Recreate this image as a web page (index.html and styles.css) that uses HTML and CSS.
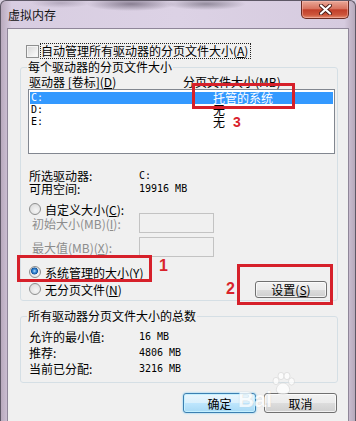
FILE: index.html
```html
<!DOCTYPE html>
<html lang="zh-CN">
<head>
  <meta charset="UTF-8">
  <title>虚拟内存</title>
  <link rel="stylesheet" href="styles.css">
</head>
<body>
  <div class="window">
    <div class="titlebar">
      <span class="title">虚拟内存</span>
      <div class="close">
        <svg width="13" height="11" viewBox="0 0 13 11">
          <path d="M2 1.5 L11 9.5 M11 1.5 L2 9.5" stroke="#4a1d18" stroke-width="4" stroke-linecap="round"/>
          <path d="M2 1.5 L11 9.5 M11 1.5 L2 9.5" stroke="#fff" stroke-width="2.2" stroke-linecap="round"/>
        </svg>
      </div>
    </div>

    <div class="client">
      <div class="check-row">
        <span class="checkbox"></span>
        <span class="focus">自动管理所有驱动器的分页文件大小(<u>A</u>)</span>
      </div>

      <fieldset class="group">
        <legend>每个驱动器的分页文件大小</legend>
        <div class="list-head">
          <span class="head-drive">驱动器 [卷标](<u>D</u>)</span>
          <span>分页文件大小(MB)</span>
        </div>
        <div class="listbox">
          <div class="list-row selected"><span class="row-drive mono">C:</span><span>托管的系统</span></div>
          <div class="list-row"><span class="row-drive mono">D:</span><span>无</span></div>
          <div class="list-row"><span class="row-drive mono">E:</span><span>无</span></div>
        </div>

        <div class="info">
          <div class="info-row"><span class="info-label">所选驱动器:</span><span class="mono">C:</span></div>
          <div class="info-row"><span class="info-label">可用空间:</span><span class="mono">19916 MB</span></div>
        </div>

        <div class="radio-row custom-row"><span class="radio"></span>自定义大小(<u>C</u>):</div>
        <div class="field-row first-field">
          <span class="field-label">初始大小(MB)(<u>I</u>):</span>
          <span class="textbox"></span>
        </div>
        <div class="field-row">
          <span class="field-label">最大值(MB)(<u>X</u>):</span>
          <span class="textbox"></span>
        </div>
        <div class="radio-row system-row"><span class="radio checked"></span>系统管理的大小(<u>Y</u>)</div>
        <div class="radio-row none-row">
          <span class="radio"></span>无分页文件(<u>N</u>)
          <span class="btn set-btn">设置(<u>S</u>)</span>
        </div>
      </fieldset>

      <fieldset class="group totals">
        <legend>所有驱动器分页文件大小的总数</legend>
        <div class="total-row"><span class="info-label">允许的最小值:</span><span class="mono">16 MB</span></div>
        <div class="total-row"><span class="info-label">推荐:</span><span class="mono">4806 MB</span></div>
        <div class="total-row"><span class="info-label">当前已分配:</span><span class="mono">3216 MB</span></div>
      </fieldset>

      <div class="actions">
        <span class="btn btn-default">确定</span>
        <span class="btn">取消</span>
      </div>
    </div>
  </div>

  <!-- annotations drawn over the dialog -->
  <div class="mark mark-3"></div>
  <div class="mark mark-1"></div>
  <div class="mark mark-2"></div>
  <span class="num num-3">3</span>
  <span class="num num-1">1</span>
  <span class="num num-2">2</span>

  <div class="watermark">
    <svg class="paw" width="26" height="24" viewBox="0 0 26 24">
      <ellipse cx="6" cy="9" rx="3" ry="3.6"/>
      <ellipse cx="11" cy="4" rx="3" ry="3.6"/>
      <ellipse cx="17" cy="4" rx="3" ry="3.6"/>
      <ellipse cx="21.5" cy="9.5" rx="3" ry="3.6"/>
      <path d="M13 11 C8 11 5 17 7 20 C9 23 17 23 19 20 C21 17 18 11 13 11 Z"/>
    </svg>
    <span class="wm-text">Bai</span>
  </div>
</body>
</html>
```

FILE: styles.css
```css
* {
  box-sizing: border-box;
}

body {
  margin: 0;
  position: relative;
  font-family: "Noto Sans CJK SC", "Noto Sans", sans-serif;
  font-size: 12px;
  color: #000;
  background: #d8cfdf;
}

u {
  text-decoration: underline;
  text-underline-offset: 1px;
}

.mono {
  font-family: "DejaVu Sans Mono", "Liberation Mono", monospace;
  font-size: 10px;
}

.window {
  width: 356px;
  height: 421px;
  overflow: hidden;
  border: 1px solid #5e5866;
  border-bottom: 0;
  border-radius: 6px 6px 0 0;
  background:
    radial-gradient(ellipse 45px 7px at 130px 3px, rgba(70, 60, 80, 0.55), transparent),
    radial-gradient(ellipse 40px 6px at 205px 3px, rgba(60, 55, 70, 0.45), transparent),
    radial-gradient(ellipse 30px 5px at 60px 2px, rgba(90, 80, 100, 0.3), transparent),
    linear-gradient(to right, #b9aabd, #d8cde1 3%, #dcd2e5 50%, #d6cbdf 97%, #b7a9bb);
}

.titlebar {
  display: flex;
  justify-content: space-between;
  align-items: flex-start;
  height: 27px;
  padding-left: 7px;
  padding-right: 6px;
}

.title {
  padding-top: 7px;
  line-height: 14px;
  color: #111;
}

.close {
  width: 48px;
  height: 18px;
  display: flex;
  align-items: center;
  justify-content: center;
  border: 1px solid #6a2b22;
  border-top: 0;
  border-radius: 0 0 5px 5px;
  background: linear-gradient(#e9a898, #d8735f 45%, #c13f2a 52%, #cd563c 82%, #e58f74);
  box-shadow: inset 0 0 0 1px rgba(255, 200, 190, 0.45);
}

.client {
  margin-left: 6px;
  width: 342px;
  height: 400px;
  padding-top: 14px;
  background: #f0f0f0;
  border: 1px solid #8f8699;
  border-bottom: 0;
}

.check-row {
  display: flex;
  align-items: center;
  height: 16px;
  margin-left: 18px;
}

.checkbox {
  width: 13px;
  height: 13px;
  border: 1px solid #8e8f8f;
  background: linear-gradient(135deg, #d6d6d6, #f2f2f2 70%, #fbfbfb);
  box-shadow: inset 0 0 0 1px #f4f4f4;
}

.focus {
  line-height: 14px;
  padding: 0 2px 0 0;
  margin-left: 1px;
  border: 1px dotted #222;
}

.group {
  margin: 2px 0 0 12px;
  width: 318px;
  min-width: 0;
  padding: 0 2px 3px 8px;
  border: 1px solid #d5dfe5;
  border-radius: 3px;
}

.group legend {
  padding: 0 1px;
  margin-left: -2px;
  line-height: 12px;
}

.list-head {
  display: flex;
  margin-top: 2px;
  line-height: 14px;
}

.head-drive {
  width: 154px;
}

.listbox {
  margin-left: -1px;
  width: 307px;
  height: 65px;
  padding: 2px 1px;
  background: #fff;
  border: 1px solid #828790;
}

.list-row {
  display: flex;
  height: 12px;
  line-height: 12px;
  padding-left: 1px;
}

.list-row.selected {
  background: #3399ff;
  color: #fff;
}

.row-drive {
  width: 182px;
}

.info {
  margin-top: 15px;
}

.info-row {
  display: flex;
  line-height: 13px;
}

.info-label {
  width: 110px;
}

.radio-row {
  display: flex;
  align-items: center;
}

.radio {
  width: 12px;
  height: 12px;
  margin-right: 4px;
  border-radius: 50%;
  border: 1px solid #8e8f8f;
  background: radial-gradient(circle at 60% 65%, #f6f6f6, #dcdcdc 80%);
}

.radio.checked {
  background:
    radial-gradient(circle at 45% 40%, #b6e0ff 0, #3f8fd9 1.6px, #14569f 3.2px, transparent 3.8px),
    radial-gradient(circle at 60% 65%, #f6f6f6, #dcdcdc 80%);
}

.custom-row {
  margin-top: 7px;
  height: 14px;
}

.field-row {
  display: flex;
  align-items: center;
  height: 20px;
  margin-top: 4px;
  color: #8d8d8d;
}

.first-field {
  margin-top: -3px;
}

.field-label {
  width: 107px;
  margin-left: 3px;
}

.textbox {
  width: 75px;
  height: 20px;
  border: 1px solid #c3c3c3;
  background: #f0f0f0;
}

.system-row {
  margin-top: 7px;
  height: 16px;
}

.none-row {
  height: 16px;
  margin-top: 1px;
}

.btn {
  display: flex;
  align-items: center;
  justify-content: center;
  width: 73px;
  height: 20px;
  border: 1px solid #707070;
  border-radius: 3px;
  background: linear-gradient(#f2f2f2, #ebebeb 50%, #dddddd 51%, #cfcfcf);
  box-shadow: inset 0 0 0 1px rgba(255, 255, 255, 0.7);
}

.set-btn {
  height: 17px;
  width: 72px;
  margin-left: auto;
  margin-right: 8px;
}

.totals {
  margin-top: 9px;
  padding-bottom: 5px;
}

.total-row {
  display: flex;
  line-height: 16px;
}

.total-row:first-of-type {
  margin-top: 7px;
}

.actions {
  display: flex;
  justify-content: flex-end;
  gap: 8px;
  margin-top: 10px;
  padding-right: 11px;
}

.btn-default {
  border-color: #3c7fb1;
  background: linear-gradient(#eaf6fd, #d9f0fc 50%, #bee6fd 51%, #a7d9f5);
  box-shadow: inset 0 0 0 1px #c4f0ff, 0 0 2px #5cc4f5;
}

.mark {
  position: absolute;
  border: 3px solid #d6202a;
}

.mark-3 {
  left: 192px;
  top: 83px;
  width: 103px;
  height: 26px;
}

.mark-1 {
  left: 17px;
  top: 255px;
  width: 135px;
  height: 27px;
}

.mark-2 {
  left: 237px;
  top: 264px;
  width: 96px;
  height: 41px;
}

.num {
  position: absolute;
  font-family: "Liberation Sans", Arial, sans-serif;
  font-weight: bold;
  font-size: 16px;
  line-height: 16px;
  color: #d9232c;
}

.num-3 {
  left: 233px;
  top: 114px;
  font-size: 14px;
}

.num-1 {
  left: 159px;
  top: 258px;
}

.num-2 {
  left: 226px;
  top: 281px;
}

.watermark {
  position: absolute;
  left: 238px;
  top: 372px;
  display: flex;
  align-items: flex-end;
  opacity: 0.75;
}

.paw {
  position: absolute;
  left: 32px;
  top: 0;
  fill: #fff;
  stroke: #c9c9c9;
  stroke-width: 0.6;
}

.wm-text {
  margin-top: 16px;
  font-family: "Liberation Sans", Arial, sans-serif;
  font-weight: bold;
  font-size: 22px;
  line-height: 24px;
  color: #fff;
  text-shadow: 0 0 1px #bdbdbd;
}
```
